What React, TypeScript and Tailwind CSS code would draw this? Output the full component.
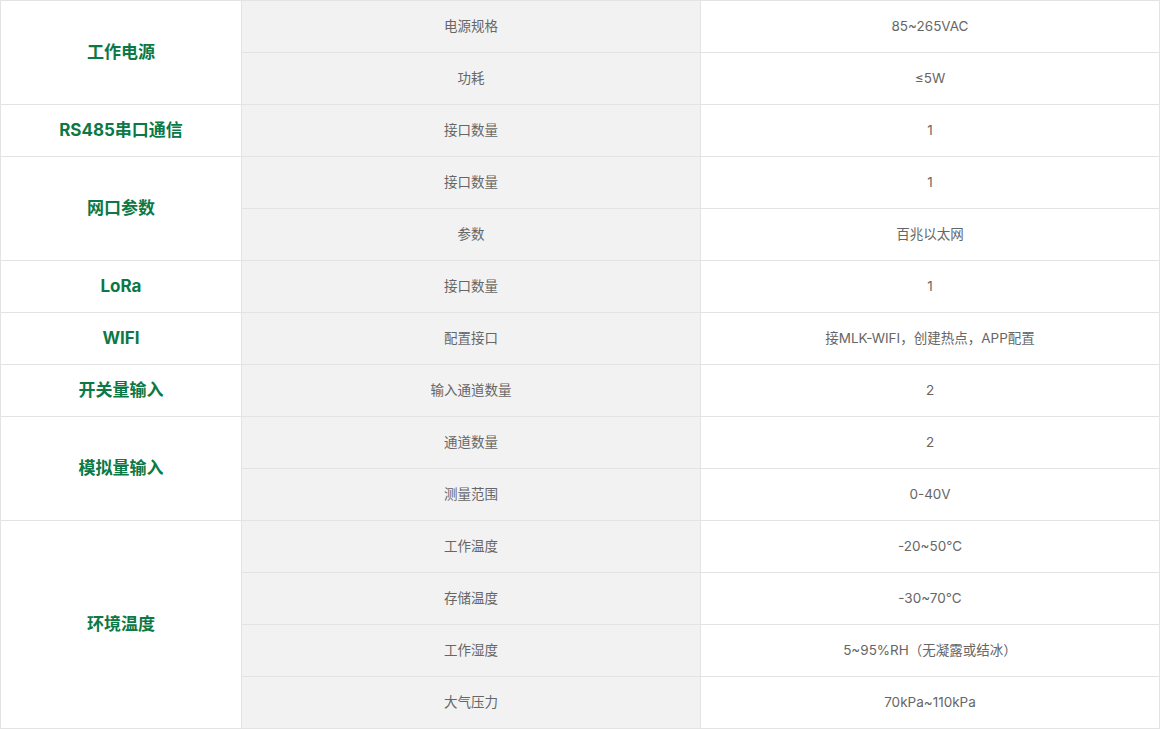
const groups = [
  { title: '工作电源', rows: [['电源规格', '85~265VAC'], ['功耗', '≤5W']] },
  { title: 'RS485串口通信', rows: [['接口数量', '1']] },
  { title: '网口参数', rows: [['接口数量', '1'], ['参数', '百兆以太网']] },
  { title: 'LoRa', rows: [['接口数量', '1']] },
  { title: 'WIFI', rows: [['配置接口', '接MLK-WIFI，创建热点，APP配置']] },
  { title: '开关量输入', rows: [['输入通道数量', '2']] },
  { title: '模拟量输入', rows: [['通道数量', '2'], ['测量范围', '0-40V']] },
  {
    title: '环境温度',
    rows: [
      ['工作温度', '-20~50℃'],
      ['存储温度', '-30~70℃'],
      ['工作湿度', '5~95%RH（无凝露或结冰）'],
      ['大气压力', '70kPa~110kPa'],
    ],
  },
];

const spanClass: Record<number, string> = {
  1: 'row-span-1',
  2: 'row-span-2',
  4: 'row-span-4',
};

export default function App() {
  return (
    <div className="w-[1160px] h-[729px] bg-white font-['Inter','Noto_Sans_CJK_SC',sans-serif]">
      <div className="grid grid-cols-[241px_459px_459px] grid-rows-[repeat(14,52px)] border-l border-t border-[#e3e3e3]">
        {groups.map((g) => (
          <>
            <div
              key={g.title}
              className={`${spanClass[g.rows.length]} flex items-center justify-center border-r border-b border-[#e3e3e3] text-[17px] leading-none font-bold text-[#0b7845]`}
            >
              {g.title}
            </div>
            {g.rows.map(([k, v], i) => (
              <>
                <div
                  key={g.title + k + i}
                  className="flex items-center justify-center border-r border-b border-[#e3e3e3] bg-[#f2f2f2] text-[13.5px] leading-none text-[#666]"
                >
                  {k}
                </div>
                <div
                  key={g.title + v + i}
                  className="flex items-center justify-center border-r border-b border-[#e3e3e3] text-[13.5px] leading-none text-[#666]"
                >
                  {v}
                </div>
              </>
            ))}
          </>
        ))}
      </div>
    </div>
  );
}
